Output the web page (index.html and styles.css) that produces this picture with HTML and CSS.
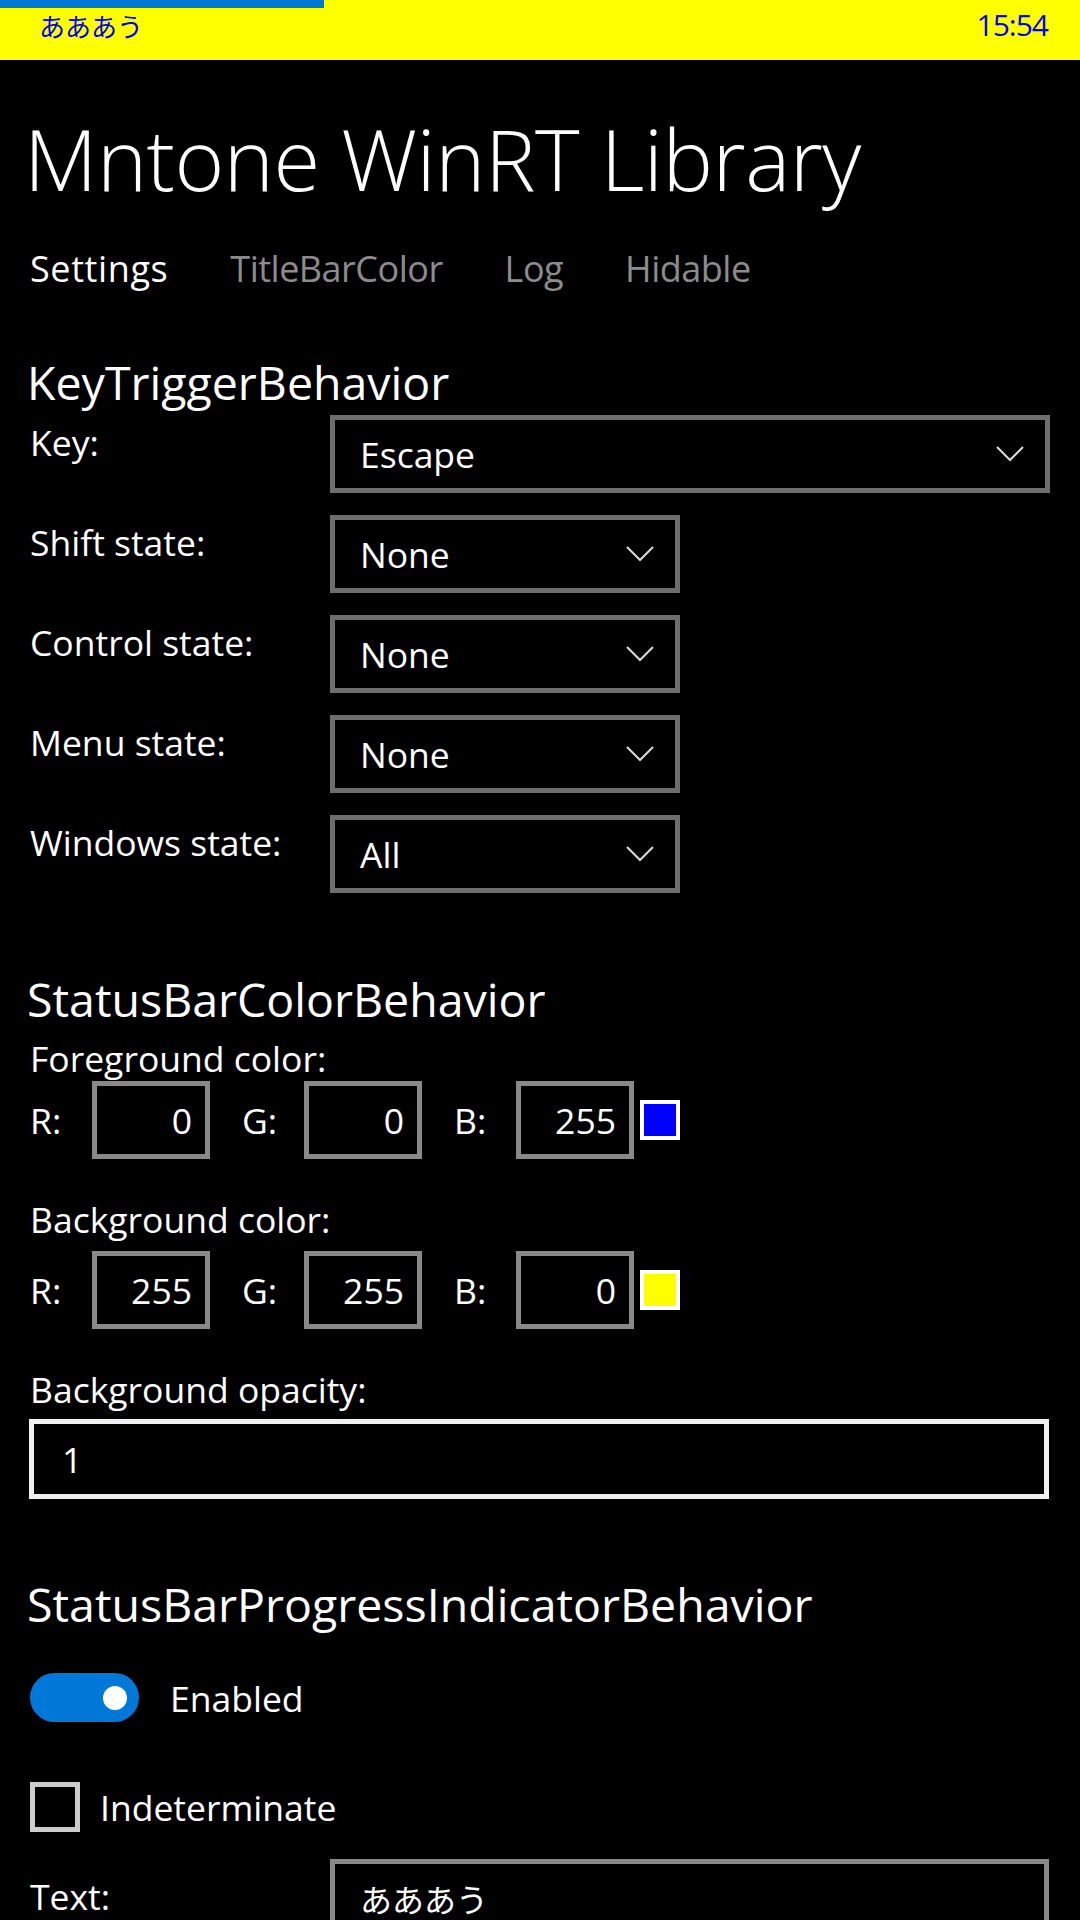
FILE: index.html
```html
<!DOCTYPE html>
<html>
<head>
<meta charset="utf-8">
<link rel="stylesheet" href="styles.css">
</head>
<body>
<div class="statusbar">
  <div class="progress"></div>
  <span class="sb-text">あああう</span>
  <span class="sb-time">15:54</span>
</div>
<div class="page">
  <h1 class="title">Mntone WinRT Library</h1>
  <nav class="pivot">
    <span class="pivot-item active">Settings</span>
    <span class="pivot-item">TitleBarColor</span>
    <span class="pivot-item">Log</span>
    <span class="pivot-item">Hidable</span>
  </nav>

  <h2 class="section-title ktb">KeyTriggerBehavior</h2>
  <div class="form-grid">
    <div class="label">Key:</div>
    <div class="combo wide"><span>Escape</span><svg class="chev" viewBox="0 0 28 16"><path d="M1 1 L14 14 L27 1" fill="none" stroke="#dcdcdc" stroke-width="2"/></svg></div>
    <div class="label">Shift state:</div>
    <div class="combo"><span>None</span><svg class="chev" viewBox="0 0 28 16"><path d="M1 1 L14 14 L27 1" fill="none" stroke="#dcdcdc" stroke-width="2"/></svg></div>
    <div class="label">Control state:</div>
    <div class="combo"><span>None</span><svg class="chev" viewBox="0 0 28 16"><path d="M1 1 L14 14 L27 1" fill="none" stroke="#dcdcdc" stroke-width="2"/></svg></div>
    <div class="label">Menu state:</div>
    <div class="combo"><span>None</span><svg class="chev" viewBox="0 0 28 16"><path d="M1 1 L14 14 L27 1" fill="none" stroke="#dcdcdc" stroke-width="2"/></svg></div>
    <div class="label">Windows state:</div>
    <div class="combo"><span>All</span><svg class="chev" viewBox="0 0 28 16"><path d="M1 1 L14 14 L27 1" fill="none" stroke="#dcdcdc" stroke-width="2"/></svg></div>
  </div>

  <h2 class="section-title sbc">StatusBarColorBehavior</h2>
  <div class="label block fg-label">Foreground color:</div>
  <div class="rgb-row">
    <span class="ch">R:</span><div class="num">0</div>
    <span class="ch">G:</span><div class="num">0</div>
    <span class="ch">B:</span><div class="num">255</div>
    <div class="swatch blue"></div>
  </div>
  <div class="label block bg-label">Background color:</div>
  <div class="rgb-row">
    <span class="ch">R:</span><div class="num">255</div>
    <span class="ch">G:</span><div class="num">255</div>
    <span class="ch">B:</span><div class="num">0</div>
    <div class="swatch yellow"></div>
  </div>
  <div class="label block op-label">Background opacity:</div>
  <div class="textbox focused">1</div>

  <h2 class="section-title sbp">StatusBarProgressIndicatorBehavior</h2>
  <div class="toggle-row">
    <div class="toggle"><div class="knob"></div></div>
    <span class="toggle-label">Enabled</span>
  </div>
  <div class="check-row">
    <div class="checkbox"></div>
    <span class="check-label">Indeterminate</span>
  </div>
  <div class="form-grid text-grid">
    <div class="label text-label">Text:</div>
    <div class="textbox gray">あああう</div>
  </div>
</div>
</body>
</html>
```

FILE: styles.css
```css
html, body {
  margin: 0;
  padding: 0;
  background: #000;
  width: 1080px;
  height: 1920px;
  overflow: hidden;
}
body {
  font-family: "Open Sans", "Noto Sans CJK JP", sans-serif;
  color: #fff;
}
.statusbar {
  position: relative;
  height: 60px;
  background: #ffff00;
  color: #0000ff;
  display: flex;
  justify-content: space-between;
  align-items: center;
  padding: 0 32px 0 39px;
  box-sizing: border-box;
}
.progress {
  position: absolute;
  left: 0;
  top: 0;
  width: 324px;
  height: 8px;
  background: #0078d7;
}
.sb-text {
  font-family: "Noto Sans CJK JP", sans-serif;
  font-size: 26px;
  line-height: 30px;
  margin-top: -8px;
}
.sb-time {
  font-family: "Open Sans", sans-serif;
  font-size: 30px;
  letter-spacing: -1px;
  line-height: 36px;
  margin-top: -10px;
}
.page {
  padding: 0 31px 0 30px;
}
.title {
  margin: 41px 0 0 -6px;
  font-size: 85px;
  font-weight: 300;
  line-height: 114px;
  letter-spacing: -0.5px;
}
.pivot {
  display: flex;
  gap: 62px;
  margin-top: 29px;
  font-size: 36px;
  line-height: 50px;
}
.pivot-item { color: #8c8c8c; letter-spacing: -0.5px; }
.pivot-item.active { color: #fff; font-weight: 500; letter-spacing: 0.6px; }
.section-title {
  font-size: 46.5px;
  font-weight: 400;
  line-height: 56px;
  margin: 0 0 0 -3px;
}
.section-title.ktb { margin-top: 60px; }
.section-title.sbc { margin-top: 78px; }
.section-title.sbp { margin-top: 77px; }
.form-grid {
  display: grid;
  grid-template-columns: 300px 1fr;
  row-gap: 22px;
  margin-top: 5px;
  align-items: start;
}
.label {
  font-size: 35.5px;
  line-height: 46px;
  padding-top: 4px;
}
.label.block { padding-top: 0; }
.combo {
  height: 78px;
  width: 350px;
  box-sizing: border-box;
  border: 5px solid #6e6e6e;
  display: flex;
  align-items: center;
  justify-content: space-between;
  padding: 0 21px 0 25px;
  font-size: 35.5px;
}
.combo.wide { width: 720px; }
.chev { width: 28px; height: 16px; }
.fg-label { margin-top: 8px; }
.bg-label { margin-top: 37px; }
.op-label { margin-top: 37px; }
.rgb-row {
  display: flex;
  align-items: center;
  font-size: 35.5px;
}
.fg-label + .rgb-row { margin-top: 0; }
.bg-label + .rgb-row { margin-top: 9px; }
.ch { width: 62px; }
.num {
  width: 118px;
  height: 78px;
  box-sizing: border-box;
  border: 5px solid #898989;
  display: flex;
  align-items: center;
  justify-content: flex-end;
  padding-right: 13px;
  margin-right: 32px;
}
.num:nth-of-type(3) { margin-right: 6px; }
.swatch {
  width: 40px;
  height: 40px;
  box-sizing: border-box;
  border: 4px solid #fff;
}
.swatch.blue { background: #0000ff; }
.swatch.yellow { background: #ffff00; }
.textbox {
  height: 80px;
  box-sizing: border-box;
  display: flex;
  align-items: center;
  padding-left: 28px;
  font-size: 35.5px;
}
.textbox.focused {
  border: 5px solid #f0f0f0;
  margin-top: 7px;
  margin-left: -1px;
}
.textbox.gray {
  border: 5px solid #898989;
  font-family: "Noto Sans CJK JP", sans-serif;
  font-size: 32px;
  align-items: flex-start;
  padding-top: 11px;
  padding-left: 25px;
  height: 78px;
}
.toggle-row {
  display: flex;
  align-items: center;
  margin-top: 41px;
}
.toggle {
  width: 109px;
  height: 49px;
  border-radius: 25px;
  background: #0078d7;
  display: flex;
  align-items: center;
  justify-content: flex-end;
  padding-right: 12px;
  box-sizing: border-box;
}
.knob {
  width: 24px;
  height: 24px;
  border-radius: 50%;
  background: #fff;
}
.toggle-label {
  margin-left: 31px;
  font-size: 35.5px;
}
.check-row {
  display: flex;
  align-items: center;
  margin-top: 60px;
}
.checkbox {
  width: 50px;
  height: 50px;
  box-sizing: border-box;
  border: 5px solid #cccccc;
}
.check-label {
  margin-left: 20px;
  font-size: 35.5px;
}
.text-grid { margin-top: 27px; }
.text-label { padding-top: 14px; }
```
